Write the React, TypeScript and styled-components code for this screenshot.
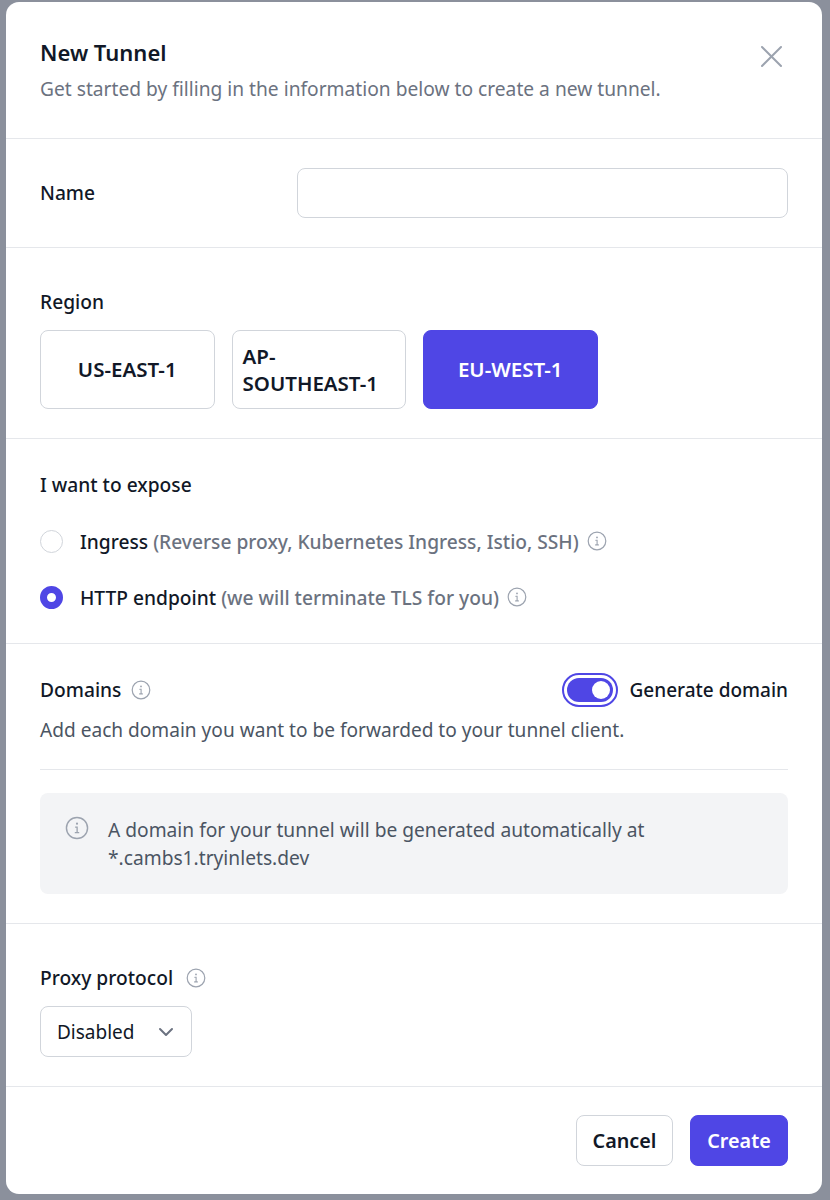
import React from "react";
import styled, { createGlobalStyle } from "styled-components";

const GlobalStyle = createGlobalStyle`
  html, body {
    margin: 0;
    padding: 0;
    background: #8b909c;
  }
  * {
    box-sizing: border-box;
  }
`;

const Overlay = styled.div`
  width: 830px;
  height: 1200px;
  padding: 2px 8px 6px 6px;
  background: #8b909c;
  font-family: "Noto Sans", "Open Sans", sans-serif;
`;

const Modal = styled.div`
  height: 1192px;
  background: #fff;
  border-radius: 13px;
  overflow: hidden;
  display: flex;
  flex-direction: column;
`;

const Section = styled.section<{ $height: number; $last?: boolean }>`
  height: ${(p) => p.$height}px;
  padding: 0 34px;
  border-bottom: ${(p) => (p.$last ? "none" : "1px solid #e5e7eb")};
  display: flex;
  flex-direction: column;
`;

const Header = styled(Section)`
  flex-direction: row;
  justify-content: space-between;
  padding-top: 35px;
`;

const Title = styled.h2`
  margin: 0;
  font-size: 22px;
  line-height: 30px;
  font-weight: 600;
  color: #111827;
`;

const Subtitle = styled.p`
  margin: 9px 0 0;
  font-size: 19.2px;
  line-height: 26px;
  color: #6b7280;
`;

const CloseButton = styled.button`
  width: 24px;
  height: 24px;
  margin: 7px 5px 0 0;
  padding: 0;
  border: none;
  background: none;
  color: #9ca3af;
`;

const Label = styled.div<{ $gap?: number }>`
  display: flex;
  align-items: center;
  gap: ${(p) => p.$gap ?? 10}px;
  font-size: 19.2px;
  line-height: 26px;
  font-weight: 500;
  color: #111827;
`;

const NameRow = styled(Section)`
  flex-direction: row;
  align-items: center;
  justify-content: space-between;
`;

const TextInput = styled.input`
  width: 491px;
  height: 50px;
  border: 1.5px solid #d1d5db;
  border-radius: 8px;
  background: #fff;
  outline: none;
`;

const RegionSection = styled(Section)`
  padding-top: 41px;
`;

const RegionGrid = styled.div`
  display: flex;
  gap: 17px;
  margin-top: 15px;
`;

const RegionCard = styled.div<{ $active?: boolean; $wrapped?: boolean }>`
  width: 174.5px;
  height: 79px;
  padding: 0 10px;
  display: flex;
  align-items: center;
  justify-content: ${(p) => (p.$wrapped ? "flex-start" : "center")};
  border-radius: 8px;
  border: 1.5px solid ${(p) => (p.$active ? "#4f46e5" : "#d1d5db")};
  background: ${(p) => (p.$active ? "#4f46e5" : "#fff")};
  color: ${(p) => (p.$active ? "#fff" : "#111827")};
  font-size: 20.5px;
  line-height: 27px;
  font-weight: 600;
  text-align: ${(p) => (p.$wrapped ? "left" : "center")};
`;

const ExposeSection = styled(Section)`
  padding-top: 33px;
`;

const RadioRow = styled.div`
  display: flex;
  align-items: center;
  height: 26px;
  margin-top: 30px;
  font-size: 19.2px;
`;

const Radio = styled.span<{ $checked?: boolean }>`
  flex: none;
  width: 23px;
  height: 23px;
  margin-right: 17px;
  border-radius: 50%;
  background: #fff;
  border: ${(p) => (p.$checked ? "7px solid #4f46e5" : "1.5px solid #d1d5db")};
`;

const RadioName = styled.span`
  font-weight: 500;
  color: #111827;
  margin-right: 5px;
`;

const Muted = styled.span`
  font-weight: 500;
  color: #6b7280;
  margin-right: 8px;
`;

const DomainsSection = styled(Section)`
  padding-top: 33px;
`;

const DomainsTop = styled.div`
  display: flex;
  align-items: center;
  justify-content: space-between;
  height: 26px;
`;

const ToggleGroup = styled.div`
  display: flex;
  align-items: center;
  gap: 12px;
  font-size: 19px;
  font-weight: 500;
  color: #111827;
`;

const Toggle = styled.span`
  width: 56px;
  height: 34px;
  padding: 3px;
  border: 2px solid #4f46e5;
  border-radius: 17px;
  background: #fff;
  display: flex;
`;

const ToggleTrack = styled.span`
  flex: 1;
  padding: 3px;
  border-radius: 12px;
  background: #4f46e5;
  display: flex;
  justify-content: flex-end;
`;

const ToggleKnob = styled.span`
  width: 18px;
  height: 18px;
  border-radius: 50%;
  background: #fff;
`;

const Help = styled.p`
  margin: 14px 0 0;
  padding-bottom: 26px;
  border-bottom: 1px solid #e5e7eb;
  font-size: 19.1px;
  line-height: 26px;
  color: #4b5563;
`;

const Notice = styled.div`
  display: flex;
  gap: 19px;
  height: 101px;
  margin-top: 23px;
  padding: 23px 25px;
  border-radius: 8px;
  background: #f3f4f6;
  color: #4b5563;
  font-size: 19.2px;
  line-height: 28px;
`;

const ProxySection = styled(Section)`
  padding-top: 41px;
`;

const Select = styled.div`
  width: 152px;
  height: 51px;
  margin-top: 15px;
  padding: 0 16px;
  display: flex;
  align-items: center;
  justify-content: space-between;
  border: 1.5px solid #d1d5db;
  border-radius: 8px;
  font-size: 19px;
  color: #111827;
`;

const Footer = styled(Section)`
  flex-direction: row;
  justify-content: flex-end;
  gap: 17px;
  padding-top: 28px;
`;

const ActionButton = styled.button<{ $primary?: boolean }>`
  height: 51px;
  padding: 0;
  width: ${(p) => (p.$primary ? "98px" : "97px")};
  border-radius: 8px;
  border: 1.5px solid ${(p) => (p.$primary ? "#4f46e5" : "#d1d5db")};
  background: ${(p) => (p.$primary ? "#4f46e5" : "#fff")};
  color: ${(p) => (p.$primary ? "#fff" : "#111827")};
  font-family: inherit;
  font-size: 19.8px;
  font-weight: 600;
`;

const InfoIcon = ({ size = 20, color = "#9ca3af" }: { size?: number; color?: string }) => (
  <svg width={size} height={size} viewBox="0 0 20 20" fill="none" style={{ flex: "none" }}>
    <circle cx="10" cy="10" r="8.8" stroke={color} strokeWidth="1.2" />
    <path d="M8.8 9.2h1.3v4.6M8.6 13.9h2.8" stroke={color} strokeWidth="1.1" strokeLinecap="round" />
    <circle cx="10" cy="6.4" r="0.9" fill={color} />
  </svg>
);

const App: React.FC = () => {
  return (
    <Overlay>
      <GlobalStyle />
      <Modal>
        <Header $height={137}>
          <div>
            <Title>New Tunnel</Title>
            <Subtitle>Get started by filling in the information below to create a new tunnel.</Subtitle>
          </div>
          <CloseButton aria-label="Close">
            <svg width="24" height="24" viewBox="0 0 24 24" fill="none" stroke="currentColor" strokeWidth="2" strokeLinecap="round">
              <path d="M3 3l19 19M22 3L3 22" />
            </svg>
          </CloseButton>
        </Header>

        <NameRow $height={109}>
          <Label>Name</Label>
          <TextInput />
        </NameRow>

        <RegionSection $height={191}>
          <Label>Region</Label>
          <RegionGrid>
            <RegionCard>US-EAST-1</RegionCard>
            <RegionCard $wrapped>
              <div>
                AP-
                <br />
                SOUTHEAST-1
              </div>
            </RegionCard>
            <RegionCard $active>EU-WEST-1</RegionCard>
          </RegionGrid>
        </RegionSection>

        <ExposeSection $height={205}>
          <Label>I want to expose</Label>
          <RadioRow>
            <Radio />
            <RadioName>Ingress</RadioName>
            <Muted>(Reverse proxy, Kubernetes Ingress, Istio, SSH)</Muted>
            <InfoIcon />
          </RadioRow>
          <RadioRow>
            <Radio $checked />
            <RadioName>HTTP endpoint</RadioName>
            <Muted>(we will terminate TLS for you)</Muted>
            <InfoIcon />
          </RadioRow>
        </ExposeSection>

        <DomainsSection $height={280}>
          <DomainsTop>
            <Label>
              Domains
              <InfoIcon />
            </Label>
            <ToggleGroup>
              <Toggle>
                <ToggleTrack>
                  <ToggleKnob />
                </ToggleTrack>
              </Toggle>
              Generate domain
            </ToggleGroup>
          </DomainsTop>
          <Help>Add each domain you want to be forwarded to your tunnel client.</Help>
          <Notice>
            <InfoIcon size={24} />
            <div>
              A domain for your tunnel will be generated automatically at
              <br />
              *.cambs1.tryinlets.dev
            </div>
          </Notice>
        </DomainsSection>

        <ProxySection $height={163}>
          <Label $gap={13}>
            Proxy protocol
            <InfoIcon />
          </Label>
          <Select>
            Disabled
            <svg width="18" height="18" viewBox="0 0 18 18" fill="none" stroke="#6b7280" strokeWidth="2" strokeLinecap="round" strokeLinejoin="round">
              <path d="M3 6l6 6 6-6" />
            </svg>
          </Select>
        </ProxySection>

        <Footer $height={107} $last>
          <ActionButton>Cancel</ActionButton>
          <ActionButton $primary>Create</ActionButton>
        </Footer>
      </Modal>
    </Overlay>
  );
};

export default App;
